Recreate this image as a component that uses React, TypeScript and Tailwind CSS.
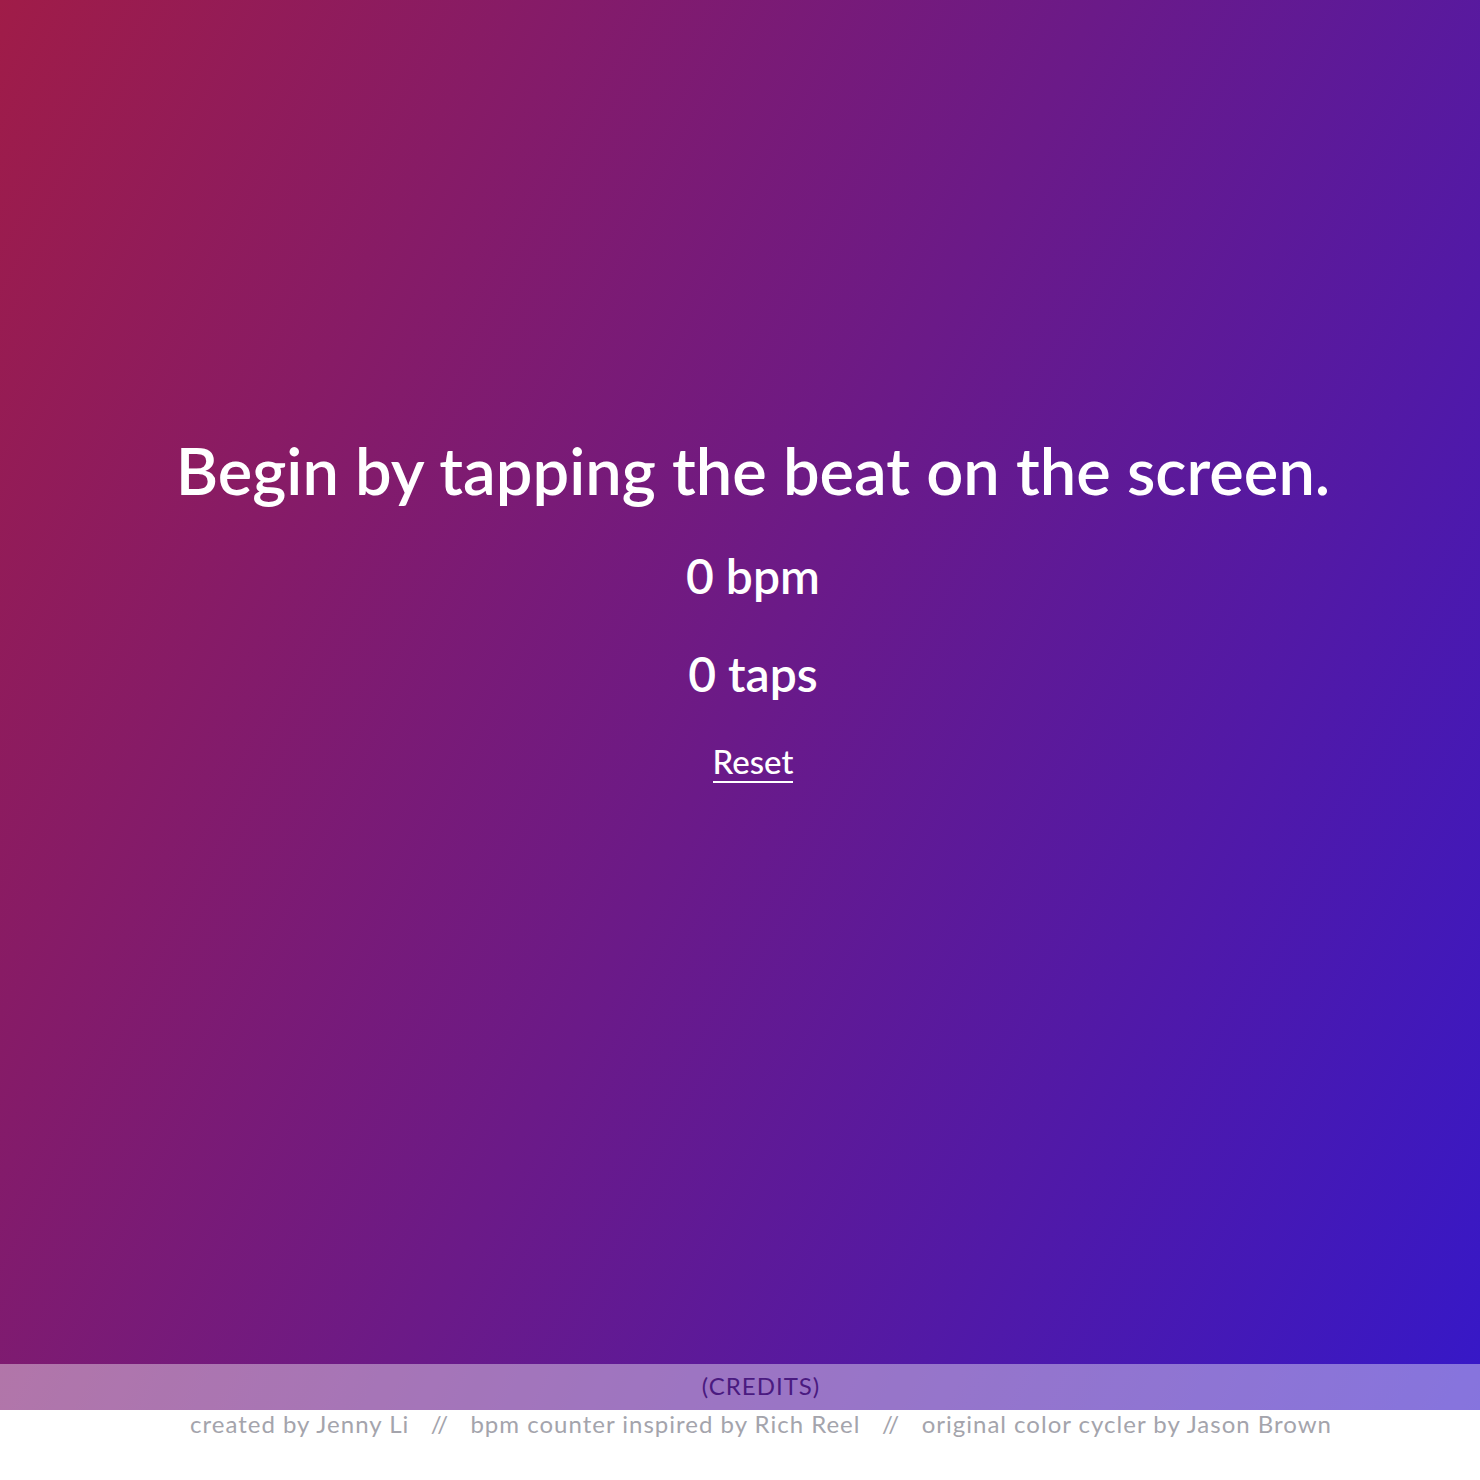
import React from "react";

export default function App() {
  return (
    <div className="w-[1480px] h-[1480px] bg-white flex flex-col" style={{ fontFamily: "Lato, 'Noto Sans', sans-serif" }}>
      <div className="h-[1410px] bg-[linear-gradient(117deg,#a01c48,#3618c8)] flex flex-col">
        <div className="flex-1 flex flex-col items-center pt-[432px] pl-[26px] text-white">
          <h1 className="text-[65px] leading-[76px] font-semibold">Begin by tapping the beat on the screen.</h1>
          <div className="mt-[40px] text-[48px] leading-[56px] font-semibold">0 bpm</div>
          <div className="mt-[42px] text-[48px] leading-[56px] font-semibold">0 taps</div>
          <div className="mt-[40px] text-[33px] leading-[38px] font-medium border-b-2 border-white pb-[1px]">Reset</div>
        </div>
        <div className="h-[46px] bg-white/40 flex items-center justify-center pl-[42px] pb-[3px] text-[24px] tracking-[1px] text-[#4a1a80]">(CREDITS)</div>
      </div>
      <div className="flex justify-center pl-[42px] leading-[28px] text-[24px] tracking-[1px] text-[#a4a4ac] whitespace-pre">
        created by Jenny Li   //   bpm counter inspired by Rich Reel   //   original color cycler by Jason Brown
      </div>
    </div>
  );
}
